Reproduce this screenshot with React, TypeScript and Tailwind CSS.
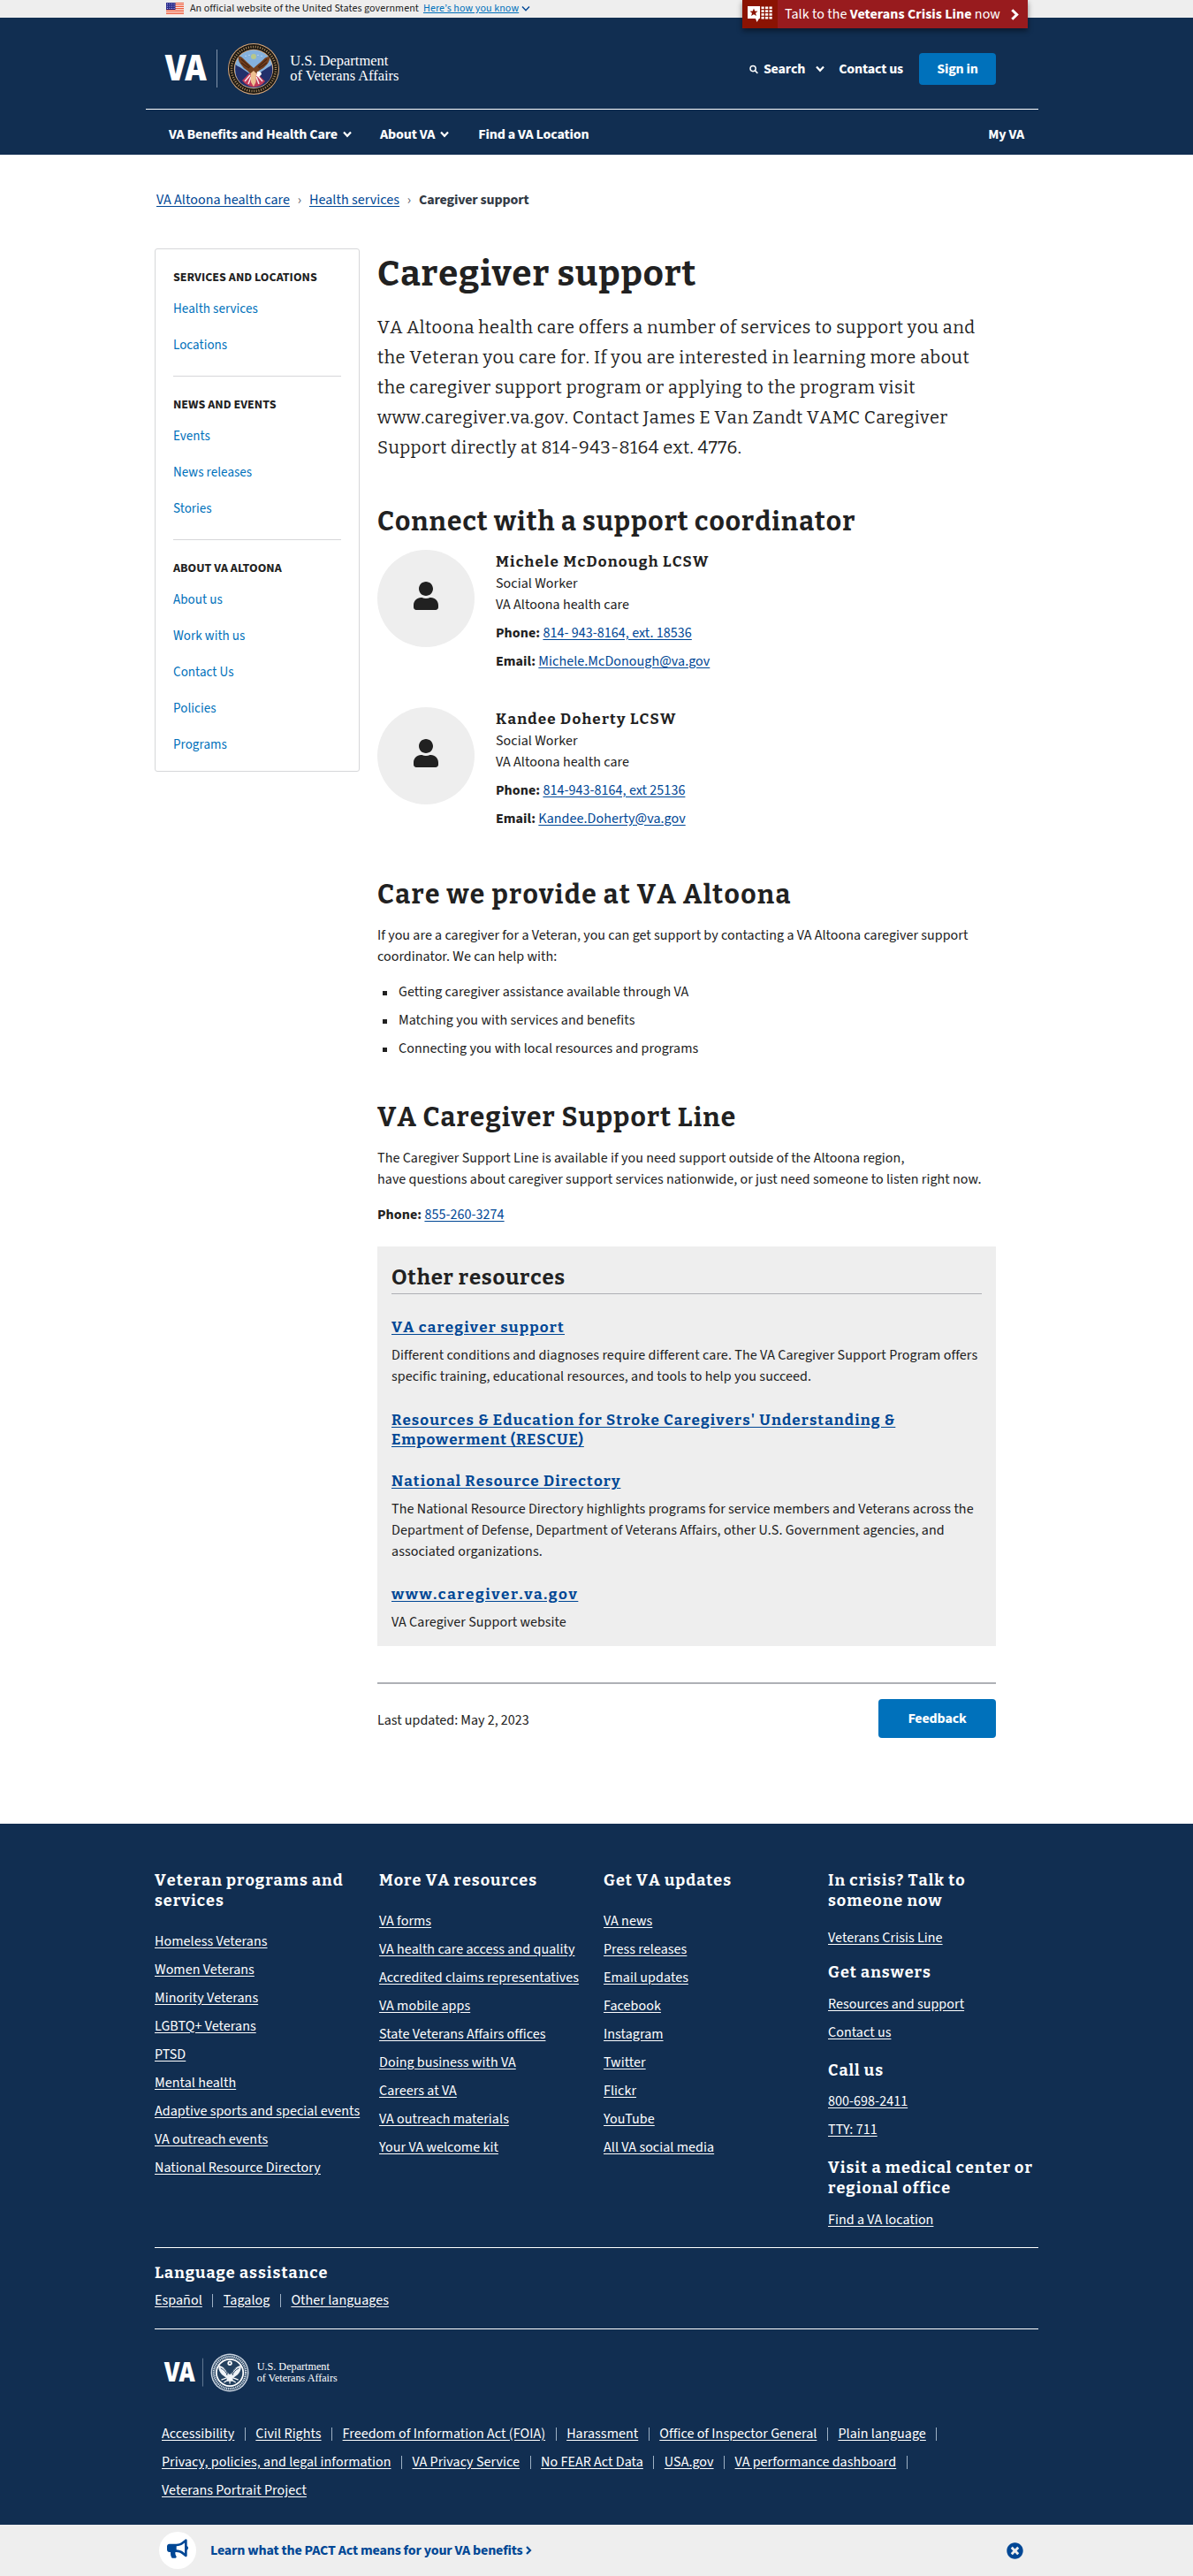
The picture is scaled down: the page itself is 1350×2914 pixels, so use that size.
import type { ReactNode } from "react";
import { FaBullhorn, FaTimesCircle, FaUser } from "react-icons/fa";

const sideNav = [
  { title: "SERVICES AND LOCATIONS", links: ["Health services", "Locations"] },
  { title: "NEWS AND EVENTS", links: ["Events", "News releases", "Stories"] },
  { title: "ABOUT VA ALTOONA", links: ["About us", "Work with us", "Contact Us", "Policies", "Programs"] },
];

const coordinators = [
  { name: "Michele McDonough LCSW", phone: "814- 943-8164, ext. 18536", email: "Michele.McDonough@va.gov" },
  { name: "Kandee Doherty LCSW", phone: "814-943-8164, ext 25136", email: "Kandee.Doherty@va.gov" },
];

const footerColumns = [
  {
    title: "Veteran programs and services",
    links: ["Homeless Veterans", "Women Veterans", "Minority Veterans", "LGBTQ+ Veterans", "PTSD", "Mental health", "Adaptive sports and special events", "VA outreach events", "National Resource Directory"],
  },
  {
    title: "More VA resources",
    links: ["VA forms", "VA health care access and quality", "Accredited claims representatives", "VA mobile apps", "State Veterans Affairs offices", "Doing business with VA", "Careers at VA", "VA outreach materials", "Your VA welcome kit"],
  },
  {
    title: "Get VA updates",
    links: ["VA news", "Press releases", "Email updates", "Facebook", "Instagram", "Twitter", "Flickr", "YouTube", "All VA social media"],
  },
];

const legalRows = [
  ["Accessibility", "Civil Rights", "Freedom of Information Act (FOIA)", "Harassment", "Office of Inspector General", "Plain language"],
  ["Privacy, policies, and legal information", "VA Privacy Service", "No FEAR Act Data", "USA.gov", "VA performance dashboard"],
];

function Chevron({ className, width = 2 }: { className: string; width?: number }) {
  return (
    <svg viewBox="0 0 10 8" className={className} fill="none" stroke="currentColor" strokeWidth={width}>
      <path d="M1 1.5 L5 5.8 L9 1.5" />
    </svg>
  );
}

function Flag() {
  return (
    <svg viewBox="0 0 20 14" className="h-3.5 w-5">
      <rect width="20" height="14" fill="#fff" />
      {[0, 2, 4, 6, 8, 10, 12].map((y) => (
        <rect key={y} y={y} width="20" height="1.1" fill="#e8502f" />
      ))}
      <rect width="10.5" height="8" fill="#2a2c8c" />
      {[1.5, 4, 6.5].map((y) =>
        [1.5, 4, 6.5, 9].map((x) => <circle key={`${x}-${y}`} cx={x} cy={y} r="0.55" fill="#cfd3ff" />),
      )}
    </svg>
  );
}

function ColorSeal() {
  return (
    <g>
      <circle cx="100" cy="29" r="29" fill="#d9a87a" />
      <circle cx="100" cy="29" r="28" fill="#1a1712" />
      <circle cx="100" cy="29" r="25" fill="none" stroke="#a8875c" strokeWidth="2.6" strokeDasharray="1.1 1.6" />
      <circle cx="100" cy="29" r="22.2" fill="#d9a87a" />
      <circle cx="100" cy="29" r="21.4" fill="#85b1dd" />
      <path d="M79.5 24 q2 2 5 3 l12 8 h8 l12 -8 q3 -1 4 -3 q3 14 -6 21 q-6 5 -14 5 q-9 0 -15 -5 q-8 -8 -6 -21z" fill="#22306b" />
      <path d="M87 42 l8 -8 h9 l9 9 q-5 6 -13 6.5 q-8 -1 -13 -7.5z" fill="#c23a58" />
      <path d="M90 43 l6 -7 M94 46 l3 -8 M110 43 l-6 -7 M106 46 l-3 -8" stroke="#f6e8ec" strokeWidth="1.5" />
      <path d="M83 15 q2 -1 5 2 q5 5 8 7.5 l4 3.5 4 -3.5 q5 -4 9 -8 q3 -2 5 -1.5 q1 4 -3 9 q-4 5 -9 7 l-2 3 h-8 l-3 -3 q-5 -3 -8 -8 q-3 -4 -2 -8z" fill="#74401f" />
      <path d="M86 18 q6 5 10 9 M86 22 q5 4 9 6 M115 18 q-6 5 -10 9 M115 22 q-5 4 -9 6" stroke="#472413" strokeWidth="1.1" fill="none" />
      <path d="M96.5 34 l3.5 -3 3 3 -0.5 10 -2.5 5 -3 -5z" fill="#eec091" />
      <path d="M104 32 q4 -1 5 3 l-3 3 -3 -1z" fill="#fff" />
      <circle cx="100" cy="15" r="3" fill="#b9c88a" />
      {[91, 95, 105, 109].map((x) => (
        <circle key={x} cx={x} cy={12 + Math.abs(x - 100) / 4} r="0.6" fill="#eaf3fb" />
      ))}
    </g>
  );
}

function MonoSeal() {
  return (
    <g>
      <circle cx="100" cy="29" r="29" fill="#c9d3df" />
      <circle cx="100" cy="29" r="27" fill="#24415f" />
      <circle cx="100" cy="29" r="24.4" fill="none" stroke="#dbe3ec" strokeWidth="3.2" strokeDasharray="1.6 1.2" />
      <circle cx="100" cy="29" r="20.5" fill="none" stroke="#fff" strokeWidth="2.4" />
      <circle cx="100" cy="29" r="18" fill="#24415f" />
      <path d="M83 18 q9 2 14 11 l3 3 3 -3 q5 -9 14 -11 q1 8 -5 14 l-7 5 -1 5 h-8 l-1 -5 -7 -5 q-6 -6 -5 -14z" fill="#eef2f6" />
      <path d="M86 22 q8 4 10 11 M114 22 q-8 4 -10 11 M91 22 q5 4 6 9 M109 22 q-5 4 -6 9" stroke="#24415f" strokeWidth="1.3" fill="none" />
      <path d="M87 40 l8 -3 M91 44 l6 -4 M113 40 l-8 -3 M109 44 l-6 -4 M100 36 v10" stroke="#fff" strokeWidth="1.6" />
      <circle cx="100" cy="14.5" r="3.6" fill="#fff" />
      <circle cx="100" cy="14.5" r="1.3" fill="#24415f" />
    </g>
  );
}

function Logo({ className, mono = false }: { className: string; mono?: boolean }) {
  return (
    <svg viewBox="0 0 266 58" className={`overflow-visible ${className}`} role="img" aria-label="VA">
      <text x="0" y="42" textLength="46.5" lengthAdjust="spacingAndGlyphs" fill="#fff" fontSize="44" className="font-['Source_Sans_3','Open_Sans',sans-serif] font-black tracking-normal">
        VA
      </text>
      <rect x="58" y="7" width="1" height="43" fill="#8295ac" />
      {mono ? <MonoSeal /> : <ColorSeal />}
      <text x="141.3" y="25" textLength="111" lengthAdjust="spacingAndGlyphs" fill="#fff" fontSize="17" className="font-['Liberation_Serif',serif] tracking-normal">
        U.S. Department
      </text>
      <text x="141.3" y="42" textLength="123" lengthAdjust="spacingAndGlyphs" fill="#fff" fontSize="17" className="font-['Liberation_Serif',serif] tracking-normal">
        of Veterans Affairs
      </text>
    </svg>
  );
}

function A({ children }: { children: ReactNode }) {
  return <a className="text-[#004795] underline underline-offset-2">{children}</a>;
}

function H2({ children, className = "tracking-[1px]" }: { children: ReactNode; className?: string }) {
  return (
    <h2 className={`font-['Bitter','DejaVu_Serif_Condensed',serif] text-[30px] leading-[39px] font-bold whitespace-nowrap [font-kerning:none] ${className}`}>
      {children}
    </h2>
  );
}

function ResourceLink({ children, className = "tracking-[1.1px]" }: { children: ReactNode; className?: string }) {
  return (
    <h3 className={`font-['Bitter','DejaVu_Serif_Condensed',serif] text-[17px] leading-[22px] font-bold text-[#004795] underline underline-offset-2 [font-kerning:none] ${className}`}>
      {children}
    </h3>
  );
}

function FooterHeading({ children, className = "" }: { children: ReactNode; className?: string }) {
  return (
    <h2 className={`font-['Bitter','DejaVu_Serif_Condensed',serif] text-[18px] leading-[23px] font-bold tracking-[1px] [font-kerning:none] ${className}`}>
      {children}
    </h2>
  );
}

function FooterLinks({ links, className = "" }: { links: string[]; className?: string }) {
  return (
    <ul className={`flex flex-col gap-2 ${className}`}>
      {links.map((l) => (
        <li key={l} className="whitespace-nowrap">
          <a className="underline underline-offset-2">{l}</a>
        </li>
      ))}
    </ul>
  );
}

function Piped({ links, trailing = false }: { links: string[]; trailing?: boolean }) {
  return (
    <div className="flex h-6 items-center whitespace-nowrap">
      {links.map((l, i) => (
        <span key={l} className="flex items-center">
          <a className="underline underline-offset-2">{l}</a>
          {(trailing || i < links.length - 1) && <span className="mx-[11.5px] h-[15px] w-px bg-[#9db0c4]" />}
        </span>
      ))}
    </div>
  );
}

export default function App() {
  return (
    <div className="h-[2914px] w-[1350px] overflow-hidden bg-white font-['Source_Sans_3','Source_Sans_Pro','Noto_Sans_CJK_SC',sans-serif] text-base leading-6 tracking-[0.06px] text-[#212121]">
      <div className="relative h-5 bg-[#eee]">
        <div className="flex h-5 items-center pl-[188px] text-xs">
          <Flag />
          <span className="ml-[7px] tracking-[0.08px]">An official website of the United States government</span>
          <a className="ml-[5px] flex items-center text-[#0071bb]">
            <span className="tracking-[0.1px] underline">Here’s how you know</span>
            <Chevron className="ml-[3px] h-2 w-2.5 text-[#004795]" width={1.4} />
          </a>
        </div>
        <a className="absolute top-0 left-[840px] z-10 flex h-8 w-[323px] items-center bg-[#981b1e] text-white shadow-[0_3px_6px_rgba(0,0,0,0.45)]">
          <span className="flex h-8 w-10 items-center justify-center bg-[#8b1303]">
            <svg viewBox="0 0 28 18" className="h-[18px] w-7">
              <path d="M0 0 h14 v14 h-1 l-2.5 4 -1.5 -4 h-9z" fill="#fff" />
              <path d="M7 2.5 l1.2 3 3.3 0.2 -2.5 2.1 0.9 3.2 -2.9 -1.8 -2.9 1.8 0.9 -3.2 -2.5 -2.1 3.3 -0.2z" fill="#8b1303" />
              {[1, 4.8, 8.6, 12.4].map((y) =>
                [15.5, 20, 24.5].map((x) => <rect key={`${x}-${y}`} x={x} y={y - 0.5} width="3.2" height="2.6" fill="#fff" />),
              )}
            </svg>
          </span>
          <span className="ml-2 w-[242px] whitespace-nowrap">
            Talk to the <b>Veterans Crisis Line</b> now
          </span>
          <svg viewBox="0 0 9 13" className="ml-3.5 h-[13px] w-[9px]" fill="none" stroke="#fff" strokeWidth="3">
            <path d="M1.3 1.2 L6.7 6.5 L1.3 11.8" />
          </svg>
        </a>
      </div>

      <header className="h-[155px] bg-[#112e51] text-white">
        <div className="ml-[165px] flex h-[104px] w-[1010px] items-start border-b border-white">
          <Logo className="mt-[29px] ml-[22px] h-[58px] w-[266px]" />
          <div className="mt-10 ml-auto flex h-9 items-center font-bold tracking-[-0.16px]">
            <svg viewBox="0 0 11 11" className="mr-1.5 h-[11px] w-2.5" fill="none" stroke="currentColor" strokeWidth="1.6">
              <circle cx="4.5" cy="4.5" r="3.4" />
              <path d="M7 7 L10.3 10.3" />
            </svg>
            <span>Search</span>
            <Chevron className="mr-4 ml-3 h-2 w-2.5" width={2.2} />
            <span>Contact us</span>
            <button className="mr-12 ml-[18px] h-9 w-[87px] rounded-[4px] bg-[#0071bb] font-bold">Sign in</button>
          </div>
        </div>
        <nav className="ml-[191px] flex h-[50px] w-[968px] items-center pt-[5px] font-bold tracking-[-0.15px]">
          <span>VA Benefits and Health Care</span>
          <Chevron className="ml-1.5 h-2 w-2.5" width={2.2} />
          <span className="ml-8">About VA</span>
          <Chevron className="ml-1.5 h-2 w-2.5" width={2.2} />
          <span className="ml-[33px]">Find a VA Location</span>
          <span className="ml-auto">My VA</span>
        </nav>
      </header>

      <div className="box-content flex h-6 pt-[39px] pl-[177px] whitespace-nowrap">
        <A>VA Altoona health care</A>
        <span className="w-[22px] text-center text-[#5b616b]">›</span>
        <A>Health services</A>
        <span className="w-[22px] text-center text-[#5b616b]">›</span>
        <span className="font-bold tracking-[-0.16px] text-[#323a45]">Caregiver support</span>
      </div>

      <div className="flex h-[1825px] items-start pl-[175px]">
        <aside className="mt-[43px] flex h-[592px] w-[232px] flex-col rounded-[3px] border border-[#d6d7d9] px-5 pt-5 text-[15px]">
          {sideNav.map((group, g) => (
            <section key={group.title} className={g === 0 ? "" : "mt-[22px] border-t border-[#d6d7d9] pt-5"}>
              <h2 className="text-sm leading-6 font-bold text-[#212121]">{group.title}</h2>
              <ul className="mt-3 flex flex-col gap-[17px]">
                {group.links.map((l) => (
                  <li key={l} className="text-[#0071bb]">{l}</li>
                ))}
              </ul>
            </section>
          ))}
        </aside>

        <main className="ml-5 w-[700px] pt-12">
          <h1 className="font-['Bitter','DejaVu_Serif_Condensed',serif] text-[40px] leading-[48px] font-bold tracking-[0.95px] [font-kerning:none]">Caregiver support</h1>
          <p className="mt-[19px] font-['Bitter','DejaVu_Serif_Condensed',serif] text-xl leading-[34px] tracking-[0.4px] whitespace-nowrap [font-kerning:none]">
            VA Altoona health care offers a number of services to support you and
            <br />
            <span className="tracking-[0.46px]">the Veteran you care for. If you are interested in learning more about</span>
            <br />
            <span className="tracking-[0.42px]">the caregiver support program or applying to the program visit</span>
            <br />
            www.caregiver.va.gov. Contact James E Van Zandt VAMC Caregiver
            <br />
            Support directly at 814-943-8164 ext. 4776.
          </p>

          <div className="mt-12">
            <H2>Connect with a support coordinator</H2>
          </div>
          <div className="mt-3">
            {coordinators.map((c) => (
              <div key={c.name} className="flex h-[177.5px] items-start">
                <div className="flex size-[110px] items-center justify-center rounded-full bg-[#eee] pb-1.5">
                  <FaUser className="h-8 w-7" />
                </div>
                <div className="ml-6 pt-[3px]">
                  <h3 className="font-['Bitter','DejaVu_Serif_Condensed',serif] text-[17px] leading-[22px] font-bold tracking-[1.2px] [font-kerning:none]">{c.name}</h3>
                  <p className="mt-px">Social Worker</p>
                  <p>VA Altoona health care</p>
                  <p className="mt-2">
                    <b>Phone:</b> <A>{c.phone}</A>
                  </p>
                  <p className="mt-2">
                    <b>Email:</b> <A>{c.email}</A>
                  </p>
                </div>
              </div>
            ))}
          </div>

          <div className="mt-4">
            <H2 className="tracking-[1.35px]">Care we provide at VA Altoona</H2>
          </div>
          <p className="mt-3.5 tracking-[0.04px] whitespace-nowrap">
            If you are a caregiver for a Veteran, you can get support by contacting a VA Altoona caregiver support
            <br />
            coordinator. We can help with:
          </p>
          <ul className="mt-4 flex flex-col gap-2">
            {["Getting caregiver assistance available through VA", "Matching you with services and benefits", "Connecting you with local resources and programs"].map((t) => (
              <li key={t} className="flex items-center">
                <span className="mt-0.5 mr-[13px] ml-1.5 size-[5px] bg-[#212121]" />
                {t}
              </li>
            ))}
          </ul>

          <div className="mt-[47px]">
            <H2 className="tracking-[1.15px]">VA Caregiver Support Line</H2>
          </div>
          <p className="mt-3.5 whitespace-nowrap">
            The Caregiver Support Line is available if you need support outside of the Altoona region,
            <br />
            have questions about caregiver support services nationwide, or just need someone to listen right now.
          </p>
          <p className="mt-4">
            <b>Phone:</b> <A>855-260-3274</A>
          </p>

          <section className="mt-6 h-[452px] bg-[#eee] px-4 pt-5 whitespace-nowrap">
            <h2 className="border-b border-[#aeb0b5] pb-0.5 font-['Bitter','DejaVu_Serif_Condensed',serif] text-2xl leading-[31px] font-bold tracking-[0.8px] [font-kerning:none]">Other resources</h2>
            <div className="mt-[27px]">
              <ResourceLink className="tracking-[1.2px]">VA caregiver support</ResourceLink>
            </div>
            <p className="mt-2 tracking-[0.09px]">
              Different conditions and diagnoses require different care. The VA Caregiver Support Program offers
              <br />
              specific training, educational resources, and tools to help you succeed.
            </p>
            <div className="mt-[27px]">
              <ResourceLink>
                Resources &amp; Education for Stroke Caregivers' Understanding &amp;
                <br />
                <span className="tracking-[0.85px]">Empowerment (RESCUE)</span>
              </ResourceLink>
            </div>
            <div className="mt-[25px]">
              <ResourceLink>National Resource Directory</ResourceLink>
            </div>
            <p className="mt-2 tracking-[0.08px]">
              The National Resource Directory highlights programs for service members and Veterans across the
              <br />
              Department of Defense, Department of Veterans Affairs, other U.S. Government agencies, and
              <br />
              associated organizations.
            </p>
            <div className="mt-[26px]">
              <ResourceLink className="tracking-[1.6px]">www.caregiver.va.gov</ResourceLink>
            </div>
            <p className="mt-2">VA Caregiver Support website</p>
          </section>

          <div className="mt-[41px] flex h-[63px] items-end justify-between border-t-2 border-[#aeb0b5]">
            <p className="mb-2 tracking-normal">Last updated: May 2, 2023</p>
            <button className="h-11 w-[133px] rounded-[4px] bg-[#0071bb] font-bold tracking-[-0.16px] text-white">Feedback</button>
          </div>
        </main>
      </div>

      <footer className="h-[793px] bg-[#112e51] px-[175px] pt-[53px] text-white">
        <div className="grid h-[426px] w-[1016px] grid-cols-4">
          {footerColumns.map((col) => (
            <div key={col.title}>
              <FooterHeading className="w-[230px]">{col.title}</FooterHeading>
              <FooterLinks links={col.links} className="mt-[22px]" />
            </div>
          ))}
          <div>
            <FooterHeading>
              In crisis? Talk to
              <br />
              someone now
            </FooterHeading>
            <FooterLinks links={["Veterans Crisis Line"]} className="mt-[18px]" />
            <FooterHeading className="mt-4">Get answers</FooterHeading>
            <FooterLinks links={["Resources and support", "Contact us"]} className="mt-3" />
            <FooterHeading className="mt-5">Call us</FooterHeading>
            <FooterLinks links={["800-698-2411", "TTY: 711"]} className="mt-[11px]" />
            <FooterHeading className="mt-5 whitespace-nowrap">
              Visit a medical center or
              <br />
              regional office
            </FooterHeading>
            <FooterLinks links={["Find a VA location"]} className="mt-3" />
          </div>
        </div>
        <div className="h-[93px] w-[1000px] border-y border-white pt-[17px]">
          <FooterHeading>Language assistance</FooterHeading>
          <div className="mt-[7px]">
            <Piped links={["Español", "Tagalog", "Other languages"]} />
          </div>
        </div>
        <Logo mono className="mt-[27px] ml-[11px] h-[44px] w-[197px]" />
        <div className="mt-[35px] ml-2 flex flex-col gap-2">
          {legalRows.map((row) => (
            <Piped key={row[0]} links={row} trailing />
          ))}
          <Piped links={["Veterans Portrait Project"]} />
        </div>
      </footer>

      <div className="flex h-[58px] items-center bg-[#eee] pl-[180px] text-[#004795]">
        <span className="flex size-[42px] items-center justify-center rounded-full bg-white pb-1">
          <FaBullhorn className="h-6 w-6" />
        </span>
        <span className="ml-4 font-bold tracking-[-0.17px] whitespace-nowrap">Learn what the PACT Act means for your VA benefits</span>
        <svg viewBox="0 0 7 10" className="ml-1 h-2.5 w-[7px]" fill="none" stroke="currentColor" strokeWidth="2.2">
          <path d="M1 1 L5 5 L1 9" />
        </svg>
        <FaTimesCircle className="mr-[192px] ml-auto size-[19px]" />
      </div>
    </div>
  );
}
